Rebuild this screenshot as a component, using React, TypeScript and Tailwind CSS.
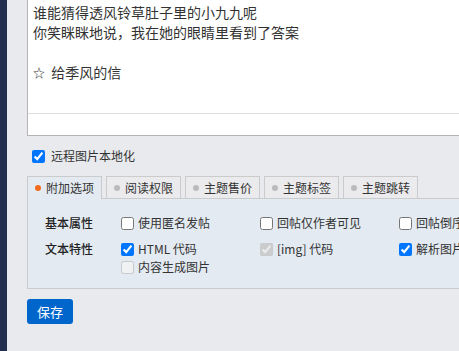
const font = { fontFamily: '"Noto Sans CJK SC", "Liberation Sans", sans-serif' };

type Opt = { label: string; checked?: boolean; disabled?: boolean };

const tabs = ['附加选项', '阅读权限', '主题售价', '主题标签', '主题跳转'];

function Check({ label, checked, disabled }: Opt) {
  return (
    <label className="flex h-[18px] w-[139px] items-center gap-[4px] whitespace-nowrap text-[#333]">
      <input
        type="checkbox"
        checked={!!checked}
        disabled={disabled}
        readOnly
        className="m-0 h-[13px] w-[13px] shrink-0"
      />
      <span>{label}</span>
    </label>
  );
}

function Row({ title, items }: { title: string; items: Opt[][] }) {
  return (
    <div className="flex">
      <div className="h-[18px] w-[76px] shrink-0 font-medium leading-[18px] text-[#222]">{title}</div>
      <div className="flex flex-col">
        {items.map((line, i) => (
          <div key={i} className="flex">
            {line.map((o) => (
              <Check key={o.label} {...o} />
            ))}
          </div>
        ))}
      </div>
    </div>
  );
}

export default function App() {
  return (
    <div className="flex h-[351px] w-[459px] overflow-hidden bg-[#e9eaee] text-[12px]" style={font}>
      <div className="w-[7px] shrink-0 bg-[#232f4e]" />
      <div className="min-w-0 flex-1 pl-[20px]">
        {/* editor */}
        <div className="-mr-[40px] border-x border-b border-[#b4b4b4] bg-white">
          <div className="h-[114px] border-b border-[#dedede] px-[5px] pt-[2px] text-[14px] leading-[20px] text-[#333]">
            <p>谁能猜得透风铃草肚子里的小九九呢</p>
            <p>你笑眯眯地说，我在她的眼睛里看到了答案</p>
            <p>&nbsp;</p>
            <p>
              <span className="text-[12px]">☆</span>&nbsp;&nbsp;给季风的信
            </p>
          </div>
          <div className="h-[21px]" />
        </div>

        <label className="mt-[11px] flex h-[18px] items-center gap-[6px] pl-[5px] text-[#333]">
          <input type="checkbox" checked readOnly className="m-0 h-[13px] w-[13px]" />
          <span>远程图片本地化</span>
        </label>

        {/* tabs */}
        <div className="mt-[11px] flex gap-[4px]">
          {tabs.map((t, i) => (
            <div
              key={t}
              className={`flex h-[22px] w-[75px] items-center gap-[5px] border-x border-t border-[#cbcbcb] pl-[7px] leading-none text-[#333] ${
                i === 0 ? 'relative -mb-px h-[23px] bg-[#e3eaf1]' : 'bg-[#ebebee]'
              }`}
            >
              <span className={`h-[6px] w-[6px] rounded-full ${i === 0 ? 'bg-[#f26b1d]' : 'bg-[#bbbbbb]'}`} />
              <span>{t}</span>
            </div>
          ))}
        </div>
        <div className="-mr-[40px] flex flex-col gap-[8px] border-b border-l border-t border-[#cbcbcb] bg-[#e3eaf1] pl-[17px] pt-[15px] pb-[12px]">
          <Row
            title="基本属性"
            items={[[{ label: '使用匿名发帖' }, { label: '回帖仅作者可见' }, { label: '回帖倒序' }]]}
          />
          <Row
            title="文本特性"
            items={[
              [
                { label: 'HTML 代码', checked: true },
                { label: '[img] 代码', checked: true, disabled: true },
                { label: '解析图片', checked: true },
              ],
              [{ label: '内容生成图片', disabled: true }],
            ]}
          />
        </div>

        <button className="mt-[10px] h-[25px] w-[46px] rounded-[3px] bg-[#0066cc] text-[13px] text-white">
          保存
        </button>
      </div>
    </div>
  );
}
